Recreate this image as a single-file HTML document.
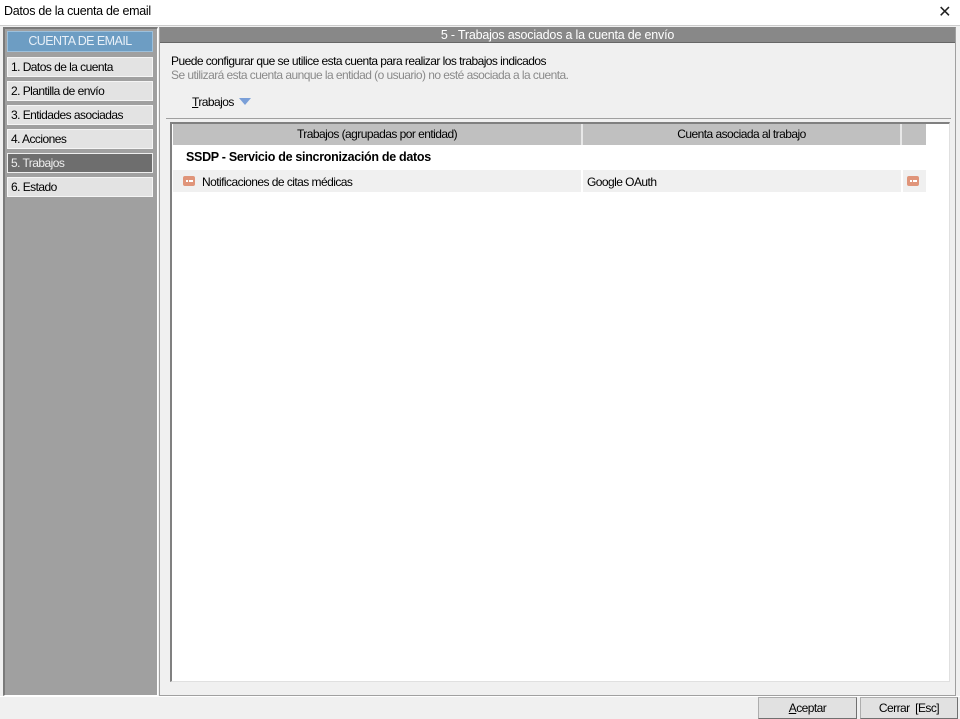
<!DOCTYPE html>
<html><head><meta charset="utf-8"><style>
*{box-sizing:border-box;margin:0;padding:0}
body{width:960px;height:719px;background:#f0f0f0;font-family:"Liberation Sans",sans-serif;font-size:12px;color:#000;position:relative;overflow:hidden;letter-spacing:-0.55px}
.abs{position:absolute}
#title{left:0;top:0;width:960px;height:25px;background:#fff}
#title span{position:absolute;left:4px;top:4px;font-size:12.5px;letter-spacing:-0.3px}
#close{position:absolute;right:9px;top:2px;font-size:16px;color:#222}
#left{left:3px;top:27px;width:155px;height:669px;background:#a0a0a0;border:2px solid #7a7a7a;border-bottom:1px solid #fff;border-right:1px solid #fff}
.nav{position:absolute;left:2px;width:146px;height:20px;background:#e3e3e3;border:1px solid #f5f5f5;padding-left:3px;line-height:18px}
#right{left:159px;top:27px;width:797px;height:669px;border:1px solid #a0a0a0;border-top-color:#888}
#hdr{left:160px;top:28px;width:795px;height:15px;background:#888;color:#fff;text-align:center;line-height:15px;font-size:12.5px;border-bottom:1px solid #666;letter-spacing:-0.2px}
#grid{left:170px;top:122px;width:780px;height:560px;background:#fff;border-left:2px solid #808080;border-top:2px solid #808080;border-right:1px solid #e0e0e0;border-bottom:1px solid #e0e0e0}
.th{position:absolute;top:124px;height:21px;background:#c0c0c0;border-right:2px solid #e8e8e8;text-align:center;line-height:20px}
.ico{position:absolute;width:12px;height:10px;background:#e0957a;border-radius:2px}
.ico i{position:absolute;top:4px;width:2px;height:2px;background:#fff}
.btn{position:absolute;top:697px;height:22px;background:#e1e1e1;border:1px solid #adadad;border-right-color:#707070;border-bottom-color:#707070;text-align:center;line-height:20px}
</style></head><body>
<div id="title" class="abs"><span>Datos de la cuenta de email</span><div id="close">✕</div></div>
<div class="abs" style="left:0;top:25px;width:960px;height:1px;background:#ccc"></div>
<div id="left" class="abs">
<div class="nav" style="top:2px;height:21px;background:#6d9dc3;border-color:#9cc0dc;color:#e8f0f8;text-align:center;padding:0;font-size:12.5px;line-height:19px">CUENTA DE EMAIL</div>
<div class="nav" style="top:28px">1. Datos de la cuenta</div>
<div class="nav" style="top:52px">2. Plantilla de envío</div>
<div class="nav" style="top:76px">3. Entidades asociadas</div>
<div class="nav" style="top:100px">4. Acciones</div>
<div class="nav" style="top:124px;background:#6e6e6e;color:#eee;border-color:#eee">5. Trabajos</div>
<div class="nav" style="top:148px">6. Estado</div>
</div>
<div id="right" class="abs"></div>
<div id="hdr" class="abs">5 - Trabajos asociados a la cuenta de envío</div>
<div class="abs" style="left:171px;top:54px">Puede configurar que se utilice esta cuenta para realizar los trabajos indicados</div>
<div class="abs" style="left:171px;top:68px;color:#8a8a8a">Se utilizará esta cuenta aunque la entidad (o usuario) no esté asociada a la cuenta.</div>
<div class="abs" style="left:192px;top:95px"><u>T</u>rabajos</div>
<div class="abs" style="left:239px;top:98px;width:0;height:0;border-left:6px solid transparent;border-right:6px solid transparent;border-top:7px solid #7a9fd8"></div>
<div class="abs" style="left:166px;top:118px;width:785px;height:1px;background:#a0a0a0"></div>
<div id="grid" class="abs"></div>
<div class="th" style="left:173px;width:410px">Trabajos (agrupadas por entidad)</div>
<div class="th" style="left:583px;width:319px">Cuenta asociada al trabajo</div>
<div class="th" style="left:902px;width:24px;border-right:none"></div>
<div class="abs" style="left:186px;top:150px;font-weight:bold;font-size:12.5px;letter-spacing:-0.3px">SSDP - Servicio de sincronización de datos</div>
<div class="abs" style="left:173px;top:170px;width:408px;height:22px;background:#f0f0f0"></div>
<div class="abs" style="left:583px;top:170px;width:318px;height:22px;background:#f0f0f0"></div>
<div class="abs" style="left:903px;top:170px;width:23px;height:22px;background:#f0f0f0"></div>
<div class="ico" style="left:183px;top:176px"><i style="left:3px"></i><i style="left:5.5px"></i><i style="left:8px"></i></div>
<div class="abs" style="left:202px;top:175px">Notificaciones de citas médicas</div>
<div class="abs" style="left:587px;top:175px">Google OAuth</div>
<div class="ico" style="left:907px;top:176px"><i style="left:3px"></i><i style="left:5.5px"></i><i style="left:8px"></i></div>
<div class="abs" style="left:0;top:696px;width:960px;height:1px;background:#fff"></div>
<div class="btn" style="left:758px;width:99px"><u>A</u>ceptar</div>
<div class="btn" style="left:860px;width:98px">Cerrar &nbsp;[Esc]</div>
</body></html>
